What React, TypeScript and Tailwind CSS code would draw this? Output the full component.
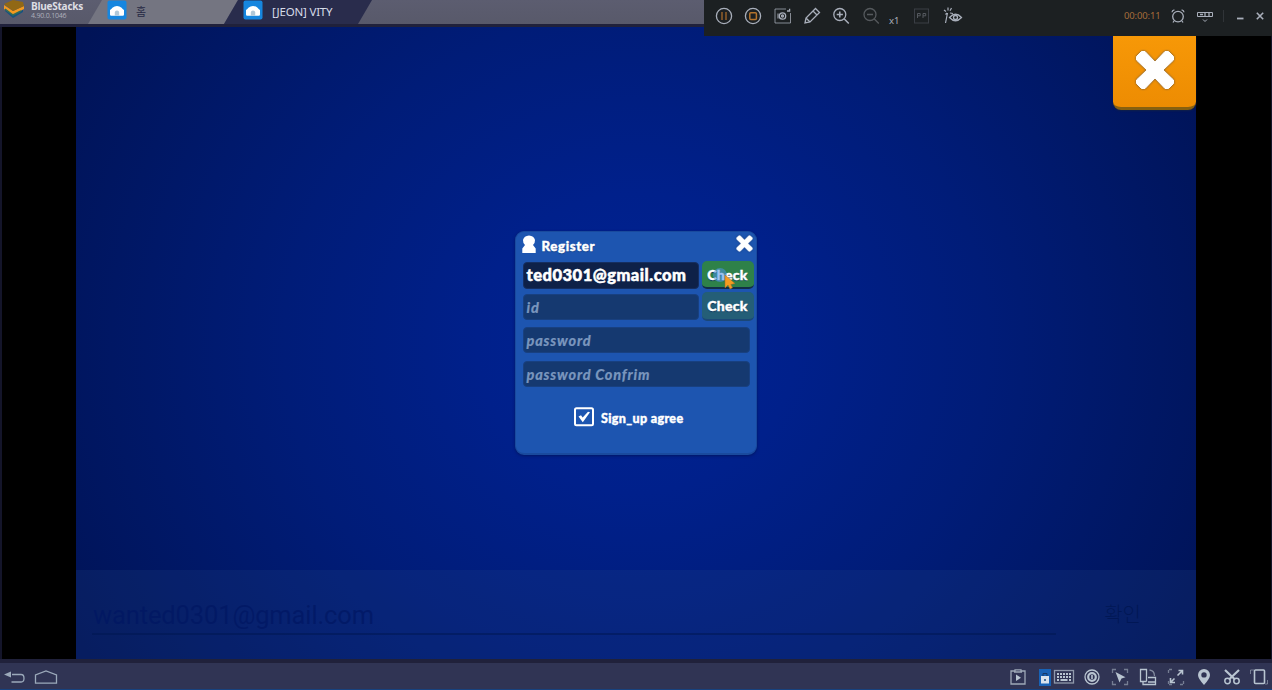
import type { ReactNode } from 'react';

function Icon({ children, w = 20, h = 20, className = '' }: { children: ReactNode; w?: number; h?: number; className?: string }) {
  return (
    <svg width={w} height={h} viewBox={`0 0 ${w} ${h}`} fill="none" stroke="currentColor" strokeWidth="1.3" className={`shrink-0 ${className}`}>
      {children}
    </svg>
  );
}

function Cell({ children, className = 'w-[29.3px]' }: { children: ReactNode; className?: string }) {
  return <div className={`flex shrink-0 items-center justify-center ${className}`}>{children}</div>;
}

function AppBadge() {
  return (
    <svg width="20" height="20" viewBox="0 0 20 20" className="shrink-0">
      <rect x="0.5" y="0.5" width="19" height="19" rx="2" fill="#1686df" />
      <path d="M3 14.5V10Q4.5 9.3 5.4 7.7Q7.5 6 10 6T14.6 7.7Q15.5 9.3 17 10V14.5Q17 15.8 15.8 15.8H4.2Q3 15.8 3 14.5Z" fill="#fff" />
      <path d="M7.8 15.8V12.5Q7.8 10.5 10 10.5T12.2 12.5V15.8Z" fill="#b1c8d8" />
    </svg>
  );
}

function Cross({ size }: { size: number }) {
  return (
    <svg width={size} height={size} viewBox="0 0 40 40" className="shrink-0 drop-shadow-[0_0_1px_rgba(25,55,110,0.7)]">
      <path
        d="M6.5 1.5H10L20 12 30 1.5H33.5L38.5 6.5V10L28 20 38.5 30V33.5L33.5 38.5H30L20 28 10 38.5H6.5L1.5 33.5V30L12 20 1.5 10V6.5Z"
        fill="#fff"
        stroke="#fff"
        strokeWidth="1"
        strokeLinejoin="round"
      />
    </svg>
  );
}

function TopBar() {
  return (
    <header className="flex h-6 shrink-0 bg-gradient-to-b from-[#5c5d70] to-[#58596a]">
      <div className="flex w-[88px] shrink-0 pl-1">
        <svg width="21" height="20" viewBox="0 0 21 20" className="shrink-0">
          <path d="M1 11 9 18 19 12V8L9 14 1 9Z" fill="#155282" />
          <path d="M0 5 9 11 20 6V9L9 15 0 9Z" fill="#f49a20" />
          <path d="M0 4 9 0 19 2 20 6 9 11Z" fill="#916815" />
          <path d="M1 9 9 15 17 11" fill="none" stroke="#316b58" strokeWidth="1.5" />
        </svg>
        <div className="flex flex-col pl-[6px] pt-px font-['Open_Sans',sans-serif] whitespace-nowrap">
          <span className="text-[10px] leading-[11px] font-bold tracking-[-0.25px] text-[#dedee4]">BlueStacks</span>
          <span className="text-[7px] leading-[8px] tracking-[-0.2px] text-[#aeb0bc]">4.90.0.1046</span>
        </div>
      </div>
      <div className="flex w-[150px] shrink-0 items-start bg-[#747581] pl-[19px] [clip-path:polygon(14px_0,100%_0,136px_100%,0_100%)]">
        <AppBadge />
        <span className="ml-[9px] mt-1 font-['Noto_Sans_CJK_KR',sans-serif] text-[11px] leading-[14px] text-[#262944]">홈</span>
      </div>
      <div className="-ml-[14px] flex w-[148px] shrink-0 items-start bg-[#292c4c] pl-[19px] [clip-path:polygon(14px_0,100%_0,134px_100%,0_100%)]">
        <AppBadge />
        <span className="ml-[9px] mt-1 font-['Noto_Sans',sans-serif] text-[11.5px] leading-[15px] tracking-[-0.2px] whitespace-nowrap text-[#d6dbe8]">[JEON] VITY</span>
      </div>
    </header>
  );
}

function RecorderBar() {
  return (
    <div className="absolute top-0 right-0 flex h-9 w-[568px] items-center bg-[#1c2022] pr-[2px] pb-1 pl-[5.5px] text-[#a9afbb]">
      <Cell>
        <Icon><circle cx="10" cy="10" r="7.6" /><path d="M8 6v8M12 6v8" stroke="#8b5b2a" strokeWidth="1.6" /></Icon>
      </Cell>
      <Cell>
        <Icon><circle cx="10" cy="10" r="7.6" /><rect x="6.8" y="6.8" width="6.6" height="6.6" rx="1" stroke="#b5742c" strokeWidth="1.5" /></Icon>
      </Cell>
      <Cell>
        <Icon><path d="M13 3H2v14h15.5V7" strokeWidth="1" strokeOpacity=".75" /><path d="M14 5h2.6V2.8" /><circle cx="9.5" cy="10" r="3.2" /><circle cx="9.5" cy="10" r="1" /><path d="M5 7.5v5" strokeWidth="1" /></Icon>
      </Cell>
      <Cell>
        <Icon><path d="m3 17 1-5L13.5 2.5l4 4L8 16ZM11 5l4 4M4 12l4 4" /></Icon>
      </Cell>
      <Cell>
        <Icon><circle cx="8.8" cy="8.5" r="6" /><path d="m13.3 13 4.5 4.5M5.7 8.5h6.2M8.8 5.4v6.2" strokeWidth="1.5" /></Icon>
      </Cell>
      <Cell className="w-[29.3px] text-[#55595d]">
        <Icon><circle cx="9" cy="8.5" r="6" /><path d="m13.3 13 4.5 4.5M6 8.5h6" /></Icon>
      </Cell>
      <Cell className="w-[18px] pt-[9px]">
        <span className="font-['Noto_Sans',sans-serif] text-[9.5px] leading-none">x1</span>
      </Cell>
      <Cell className="ml-1 w-[29px] text-[#3a3e45]">
        <Icon><rect x="2.5" y="3" width="14" height="14" strokeWidth="1" /><path d="M5.5 12V7.5h2.7v2.3H5.5M11 12V7.5h2.7v2.3H11" stroke="#55595f" strokeWidth="1" /></Icon>
      </Cell>
      <Cell className="ml-[2px] w-[29px]">
        <Icon><path d="M6.5 11.5Q12.5 5 18.5 11.5Q12.5 18 6.5 11.5Z" /><circle cx="12.5" cy="11.5" r="2" /><path d="M4.5 7 2.5 17M1 4l2 1.5M5 1.5v3M8.5 2 7 4.7M7 7l3 .5M2.5 8.5 4 7" strokeWidth="1.2" /></Icon>
      </Cell>
      <span className="ml-auto w-9 font-['Noto_Sans',sans-serif] text-[9.5px] leading-none tracking-[-0.15px] whitespace-nowrap text-[#a66c3a]">00:00:11</span>
      <Cell className="ml-[5px] w-[26px]">
        <Icon w={16} h={16}><circle cx="8" cy="8.6" r="5.3" /><path d="M2 4.2Q2.2 2.2 4.4 1.8M14 4.2Q13.8 2.2 11.6 1.8M4 13l-1 1.5M12 13l1 1.5" /></Icon>
      </Cell>
      <Cell className="w-[27px]">
        <Icon w={18} h={16}><path d="M1.5 4.5H16.5v4H1.5Z" strokeWidth="1" /><path d="M4 6.5h3M9 4.5v4M13 5v3" /><path d="m7 11.5 2 2 2-2" strokeWidth="1" /></Icon>
      </Cell>
      <div className="ml-[5px] h-3 w-px bg-[#303438]" />
      <Cell className="ml-[6px] w-5">
        <Icon w={10} h={10}><path d="M2 7.5h6.5" strokeWidth="1.8" /></Icon>
      </Cell>
      <Cell className="w-5">
        <Icon w={10} h={10}><path d="m1.8 1.8 6.4 6.4M8.2 1.8 1.8 8.2" strokeWidth="1.6" /></Icon>
      </Cell>
    </div>
  );
}

function Field({ text, active = false, className }: { text: string; active?: boolean; className: string }) {
  return (
    <div
      className={`flex shrink-0 items-center rounded-[4px] border pl-[3px] font-black whitespace-nowrap ${
        active
          ? 'border-[#152e60] bg-[#0e2148] text-[16.5px] tracking-[0.5px] text-white [-webkit-text-stroke:0.5px_currentColor]'
          : 'border-[#184080] bg-[#153970] pt-px text-[14.5px] tracking-[0.8px] text-[#7995bd] italic [-webkit-text-stroke:0.15px_currentColor]'
      } ${className}`}
    >
      {text}
    </div>
  );
}

function CheckButton({ className }: { className: string }) {
  return (
    <button className={`flex w-[52px] shrink-0 items-center justify-center rounded-[5px] border-b-2 text-[14px] font-black tracking-[0.3px] text-white [-webkit-text-stroke:0.4px_currentColor] [text-shadow:0_1px_1px_#16385b] ${className}`}>
      Check
    </button>
  );
}

function RegisterDialog() {
  return (
    <section className="absolute top-[204px] left-[439px] flex h-[224px] w-[242px] flex-col rounded-[9px] border border-b-2 border-[#194a9d] bg-[#1d55b0] px-[6.5px] font-['Lato',sans-serif] shadow-[0_1px_3px_#001765]">
      <div className="flex h-[29px] shrink-0 items-start">
        <svg width="14" height="20" viewBox="0 0 14 20" className="-ml-px mt-[2px] shrink-0">
          <path d="M3 11Q.8 9 1 6Q2 1.8 7 1.5Q12 1.8 13 6Q13.2 9 11 11L13.7 14.5V19H.3V14.5Z" fill="#fff" />
        </svg>
        <h1 className="ml-[6px] mt-[6px] text-[13.3px] leading-[16px] font-black tracking-[0.6px] text-white [-webkit-text-stroke:0.4px_currentColor] [text-shadow:0_1px_1px_#163f81]">Register</h1>
        <button className="mt-[3px] mr-[-3.5px] ml-auto flex w-[18px] items-center justify-center"><Cross size={17} /></button>
      </div>
      <div className="flex h-[29px] shrink-0">
        <Field text="ted0301@gmail.com" active className="mt-px h-[27px] w-[176px]" />
        <div className="relative ml-[3px]">
          <CheckButton className="h-[28px] border-[#122e47] bg-[#2e8149]" />
          <svg width="28" height="26" viewBox="0 0 28 26" className="absolute top-[6px] left-[9px]">
            <circle cx="9" cy="8" r="7" fill="#4c91e8" fillOpacity=".55" />
            <path d="M14 8v13l3-3 2 4 2.5-1.3-1.7-3.2 4.2-1Z" fill="#f59b21" stroke="#a66a25" strokeWidth=".5" />
          </svg>
        </div>
      </div>
      <div className="mt-[2px] flex h-[29px] shrink-0">
        <Field text="id" className="mt-[2px] h-[26px] w-[176px]" />
        <CheckButton className="ml-[3px] h-[29px] border-[#1b4777] bg-[#245e77]" />
      </div>
      <Field text="password" className="mt-[6px] h-[26px] w-[227px]" />
      <Field text="password Confrim" className="mt-2 h-[26px] w-[227px]" />
      <div className="mt-[20px] flex items-center pl-[51.5px]">
        <svg width="20" height="20" viewBox="0 0 20 20" className="shrink-0">
          <rect x="1" y="1.2" width="18" height="17" rx="1.5" fill="none" stroke="#fff" strokeWidth="2" />
          <path d="M4.5 9.5 7 8.2 8.7 10.5 14 4.8 16 5.3 8.8 15.2Z" fill="#fff" />
        </svg>
        <span className="ml-[7px] mt-[3px] text-[12.5px] leading-[16px] font-black tracking-[0.35px] whitespace-nowrap text-white [-webkit-text-stroke:0.4px_currentColor]">Sign_up agree</span>
      </div>
    </section>
  );
}

function GameArea() {
  return (
    <main className="flex h-[632px] shrink-0 bg-black">
      <div className="w-[76px] shrink-0 border-l-2 border-[#14152a]" />
      <div className="relative flex w-[1120px] shrink-0 flex-col justify-end bg-[radial-gradient(ellipse_640px_600px_at_50%_50%,#002394_0%,#00208b_25%,#001c78_55%,#001764_82%,#001357_100%)]">
        <div className="flex h-[89px] bg-[#28508a]/18 pl-4">
          <div className="mt-[63px] h-[2px] w-[964px] bg-[#00164f]/50" />
          <span className="absolute bottom-[24px] left-[17px] font-['Roboto',sans-serif] text-[25.5px] leading-10 tracking-[-0.13px] text-[#001662]/70">wanted0301@gmail.com</span>
          <span className="absolute right-[55px] bottom-[25px] font-['Noto_Sans_CJK_KR',sans-serif] text-[20px] leading-10 font-light text-[#001652]/85">확인</span>
        </div>
        <RegisterDialog />
        <div className="absolute top-[9px] right-0 flex h-[74px] w-[83px] items-center justify-center rounded-b-[8px] border-b-[3px] border-[#87600f] bg-gradient-to-b from-[#f79807] to-[#ed8c02] shadow-[0_1px_2px_#102049]">
          <div className="-mt-[4px]"><Cross size={40} /></div>
        </div>
      </div>
      <div className="flex-1 border-r border-[#14152a]" />
    </main>
  );
}

function BottomBar() {
  return (
    <footer className="flex h-[27px] shrink-0 items-center border-b border-[#17427f] bg-[#303454] pt-[2px] pl-[3px] text-[#b9c5d1]">
      <Icon w={24} h={18} className="text-[#9ba9ba]"><path d="M9 6.5h9Q21 6.5 21 10.3T18 14H8.5" /><path d="M1 6.5 8 3.5v6Z" fill="currentColor" stroke="none" /></Icon>
      <Icon w={24} h={18} className="ml-[7px] text-[#9ba9ba]"><path d="M1.5 15.2V7L12 3l10.5 4v8.2Z" /></Icon>
      <div className="ml-auto flex items-center">
        <Cell className="mr-[12px] w-[18px]">
          <Icon w={18} h={18}><path d="M6 3H2v13h14V3h-4M6 4V1.8h6V4M5 4h8" strokeOpacity=".8" /><path d="m7 6.5 5 3.3-5 3.2Z" fill="currentColor" stroke="none" /></Icon>
        </Cell>
        <Cell className="w-[12px]">
          <svg width="12" height="17" viewBox="0 0 12 17"><rect width="12" height="17" fill="#1762b6" /><rect x="2" y="7" width="8" height="7.5" fill="#d8e3ed" /><path d="M4 7V4.5h4V7" fill="none" stroke="#153866" /><path d="M5 10h2v2H5Z" fill="#47719d" /></svg>
        </Cell>
        <Cell className="ml-px w-[24px]">
          <Icon w={22} h={18}><rect x="1.5" y="2.5" width="19" height="12.5" strokeOpacity=".7" /><path d="M4 6h14M4 9h14" strokeWidth="2.2" strokeDasharray="2 1" /><path d="M4 12h2m1.5 0h7M16 12h2" strokeWidth="1.8" /></Icon>
        </Cell>
        <Cell className="ml-[2px] w-[28px]">
          <Icon w={18} h={18}><circle cx="9" cy="9" r="7" /><circle cx="9" cy="9" r="3.8" strokeWidth="2.2" /><path d="M9 7v4" strokeWidth="1.6" /></Icon>
        </Cell>
        <Cell className="w-[28px]">
          <Icon w={18} h={18}><path d="M1.5 5V1.5H5M13 1.5h3.5V5M1.5 13v3.5H5M13 16.5h3.5V13" strokeOpacity=".5" /><path d="m4.5 4 10 5.2-4 1.3-2 4Z" fill="currentColor" stroke="none" /></Icon>
        </Cell>
        <Cell className="w-[28px]">
          <Icon w={18} h={18}><path d="M7.5 13.5H1.5V1.5h6v12" /><path d="M9 9.5h7.5v7H4v-3M9 14h7" /><path d="M10.5 2q5 .5 5 6" strokeOpacity=".6" /></Icon>
        </Cell>
        <Cell className="w-[28px]">
          <Icon w={18} h={18}><path d="M1.5 5V1.5H6M1.5 13v3.5H5M13 16.5h3.5V13" strokeOpacity=".5" strokeDasharray="3 1" /><path d="M11.5 2.5h4v4M15.5 2.5l-5 5M3.5 10v4.5H8M3.5 14.5l4-4" strokeWidth="1.6" /></Icon>
        </Cell>
        <Cell className="w-[28px]">
          <Icon w={18} h={18}><path fillRule="evenodd" d="M9 17Q3 10.5 3 7a6 6 0 0 1 12 0Q15 10.5 9 17ZM9 4.2a2.7 2.7 0 1 0 0 5.4 2.7 2.7 0 0 0 0-5.4Z" fill="currentColor" stroke="none" /></Icon>
        </Cell>
        <Cell className="w-[28px]">
          <Icon w={18} h={18}><path d="m2 2 10 9.5M16 2 6 11.5" strokeWidth="2.2" /><circle cx="4.5" cy="13" r="2.7" strokeWidth="1.5" /><circle cx="13.5" cy="13" r="2.7" strokeWidth="1.5" /></Icon>
        </Cell>
        <Cell className="w-[26px]">
          <Icon w={20} h={18}><rect x="5.5" y="2" width="10" height="13.5" rx="1" strokeWidth="1.6" /><path d="M1.5 6V2H5M18.5 12v4H16" strokeWidth="1" strokeOpacity=".5" /></Icon>
        </Cell>
      </div>
    </footer>
  );
}

export default function App() {
  return (
    <div className="relative flex h-[690px] w-[1272px] flex-col overflow-hidden bg-[#1d1e37]">
      <TopBar />
      <div className="h-[3px] shrink-0 bg-[#20213b]" />
      <GameArea />
      <div className="h-1 shrink-0 bg-[#20213b]" />
      <BottomBar />
      <RecorderBar />
    </div>
  );
}
